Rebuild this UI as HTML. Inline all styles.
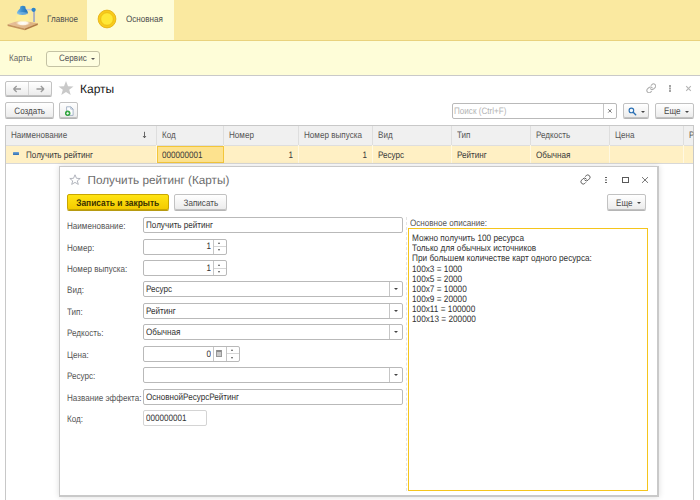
<!DOCTYPE html>
<html>
<head>
<meta charset="utf-8">
<style>
*{box-sizing:border-box;margin:0;padding:0}
html,body{width:700px;height:500px;overflow:hidden;background:#fff}
body{font-family:"Liberation Sans",sans-serif;font-size:9.3px;color:#444;position:relative;text-rendering:geometricPrecision}
.a{position:absolute;white-space:nowrap}
.t{position:absolute;white-space:nowrap;line-height:13.4px;height:13.4px;transform:scaleX(0.871);transform-origin:0 50%}
.x{display:inline-block;transform:scaleX(0.871);transform-origin:0 50%;white-space:pre}
.xc{display:inline-block;transform:scaleX(0.871);transform-origin:50% 50%}
.btn{position:absolute;border:1px solid #c2c2c2;border-radius:2px;background:linear-gradient(#ffffff,#ececec);box-shadow:0 1px 0 #b5b5b5;text-align:center;white-space:nowrap;color:#4a4a4a}
.inp{position:absolute;border:1px solid #b9b9b9;border-radius:2px;background:#fff;height:16px;line-height:15.4px;padding-left:1.6px;white-space:nowrap;color:#333}
.lbl{position:absolute;white-space:nowrap;line-height:18.8px;height:18.8px;left:67.4px;color:#555;transform:scaleX(0.871);transform-origin:0 50%}
.vd{position:absolute;top:126px;width:1px;height:37px;background:linear-gradient(#dedede 0,#dedede 19px,#fff8e2 19px,#fff8e2 37px)}
.arr{position:absolute;width:0;height:0;border-left:2px solid transparent;border-right:2px solid transparent;border-top:2.3px solid #444}
</style>
</head>
<body>
<!-- top band -->
<div class="a" style="left:0;top:0;width:700px;height:41px;background:#fae9a0"></div>
<div class="a" style="left:87px;top:0;width:87px;height:41px;background:#fefdd8"></div>
<div class="a" style="left:0;top:40px;width:700px;height:1px;background:#e9d27d"></div>
<div class="a" style="left:0;top:41px;width:700px;height:34px;background:#fefdd8"></div>
<div class="a" style="left:0;top:75px;width:700px;height:1px;background:#c9c9c9"></div>

<!-- lamp icon -->
<svg class="a" style="left:0px;top:0px" width="45" height="36" viewBox="0 0 45 36">
  <defs>
    <linearGradient id="sh" x1="0" y1="0" x2="1" y2="0"><stop offset="0" stop-color="#7fbce6"/><stop offset="0.45" stop-color="#3b8fce"/><stop offset="1" stop-color="#1f6fb3"/></linearGradient>
    <linearGradient id="bd" x1="0" y1="0" x2="1" y2="0"><stop offset="0" stop-color="#e8bf9a"/><stop offset="1" stop-color="#dcb27f"/></linearGradient>
    <radialGradient id="gl" cx="0.5" cy="0.5" r="0.5"><stop offset="0" stop-color="#ffffff"/><stop offset="0.6" stop-color="#fffaf0" stop-opacity="0.9"/><stop offset="1" stop-color="#f3dcb8" stop-opacity="0"/></radialGradient>
  </defs>
  <polygon points="7.6,24.3 19.8,20.2 37.8,23.2 24.9,28.4" fill="url(#bd)"/>
  <polygon points="7.6,24.3 24.9,28.4 24.9,30.3 7.6,26.1" fill="#c4925f"/>
  <polygon points="24.9,28.4 37.8,23.2 37.8,25 24.9,30.3" fill="#b07a47"/>
  <ellipse cx="23" cy="23" rx="7.5" ry="3" fill="url(#gl)"/>
  <polygon points="17.2,14.5 27.8,14.5 30,21.5 14.8,21.5" fill="#fdf09a" opacity="0.75"/>
  <rect x="33.1" y="10.5" width="1.9" height="11.5" fill="#aab0c0"/>
  <rect x="24.5" y="8.9" width="8.5" height="1.5" fill="#c9cbdc"/>
  <circle cx="33.6" cy="9.8" r="2.15" fill="#2c84c8"/>
  <path d="M20.3,6.6 Q22.8,4.8 25.3,6.6 L25.6,8.6 Q27.6,10.8 28,13.2 Q22.4,16.6 16.8,13.2 Q17.6,10.6 20,8.6 Z" fill="url(#sh)"/>
  <ellipse cx="22.4" cy="13.6" rx="5.2" ry="1.5" fill="#8fc6ea" opacity="0.55"/>
</svg>
<div class="t" style="left:46.6px;top:13px;color:#4d4d4d">Главное</div>

<!-- coin -->
<svg class="a" style="left:97px;top:9px" width="20" height="20" viewBox="0 0 20 20">
  <circle cx="10" cy="10" r="8.9" fill="#f8cb1c" stroke="#e2ab0a" stroke-width="0.8"/>
  <circle cx="10" cy="10" r="6.3" fill="#ffe836" stroke="#e8b40e" stroke-width="0.7"/>
</svg>
<div class="t" style="left:126px;top:13px;color:#4d4d4d">Основная</div>

<!-- second band -->
<div class="t" style="left:8.7px;top:52.4px;color:#666">Карты</div>
<div class="a" style="left:46.2px;top:50.5px;width:53.4px;height:16px;border:1px solid #c4c2a4;border-radius:3px;background:#fefee0"></div>
<div class="t" style="left:59.4px;top:52.4px;color:#555">Сервис</div>
<div class="arr" style="left:90.5px;top:58px;border-top-color:#555"></div>

<!-- nav -->
<div class="btn" style="left:5px;top:81px;width:47px;height:15px"></div>
<div class="a" style="left:28px;top:82px;width:1px;height:13px;background:#d4d4d4"></div>
<svg class="a" style="left:12px;top:84px" width="34" height="10" viewBox="0 0 34 10">
  <path d="M1.5,5 H9 M1.5,5 L4.7,2 M1.5,5 L4.7,8" stroke="#9a9a9a" stroke-width="1.3" fill="none"/>
  <path d="M32,5 H24.5 M32,5 L28.8,2 M32,5 L28.8,8" stroke="#9a9a9a" stroke-width="1.3" fill="none"/>
</svg>
<svg class="a" style="left:58.1px;top:80.1px" width="16" height="16" viewBox="0 0 16 16">
  <polygon points="8,1 10,6.2 15.5,6.4 11.2,9.8 12.7,15 8,12 3.3,15 4.8,9.8 0.5,6.4 6,6.2" fill="#c9c9c9"/>
</svg>
<div class="a" style="left:80px;top:80px;font-size:12px;line-height:18px;color:#1a1a1a">Карты</div>

<!-- link/dots/close main -->
<svg class="a" style="left:645.6px;top:82.6px" width="10.6" height="10.6" viewBox="0 0 24 24">
  <g fill="none" stroke="#adadad" stroke-width="2.4" stroke-linecap="round" stroke-linejoin="round">
    <path d="M10 13a5 5 0 0 0 7.54.54l3-3a5 5 0 0 0-7.07-7.07l-1.72 1.71"/>
    <path d="M14 11a5 5 0 0 0-7.54-.54l-3 3a5 5 0 0 0 7.07 7.07l1.71-1.71"/>
  </g>
</svg>
<div class="a" style="left:669px;top:85px;width:1.6px;height:1.6px;background:#a4a4a4;box-shadow:0 2.5px 0 #a4a4a4,0 5px 0 #a4a4a4"></div>
<svg class="a" style="left:685.4px;top:85px" width="7" height="7" viewBox="0 0 7 7"><path d="M1.2,1.2 L5.8,5.8 M5.8,1.2 L1.2,5.8" stroke="#b4b4b4" stroke-width="1.1" fill="none"/></svg>

<!-- toolbar -->
<div class="btn" style="left:5px;top:102.3px;width:48.5px;height:15.7px;line-height:17px"><span class="xc">Создать</span></div>
<div class="btn" style="left:59.2px;top:102.3px;width:19.3px;height:15.7px"></div>
<svg class="a" style="left:64px;top:105px" width="11" height="12" viewBox="0 0 11 12">
  <path d="M2.6,1.8 H6.8 L9.1,4.1 V10.4 H2.6 Z" fill="#fdfefe" stroke="#93a5bd" stroke-width="0.8"/>
  <path d="M6.8,1.8 V4.1 H9.1" fill="none" stroke="#93a5bd" stroke-width="0.7"/>
  <circle cx="3.7" cy="8.3" r="2.7" fill="#2ea43b"/>
  <path d="M3.7,6.9 V9.7 M2.3,8.3 H5.1" stroke="#fff" stroke-width="0.9"/>
</svg>

<!-- search -->
<div class="a" style="left:452px;top:103px;width:165px;height:16px;border:1px solid #b9b9b9;border-radius:2px;background:#fff"></div>
<div class="a" style="left:603px;top:104px;width:1px;height:14px;background:#c6c6c6"></div>
<div class="t" style="left:453.8px;top:105px;color:#b4b4b4">Поиск (Ctrl+F)</div>
<svg class="a" style="left:607px;top:108px" width="6" height="6" viewBox="0 0 6 6"><path d="M1.2,1.2 L4.6,4.6 M4.6,1.2 L1.2,4.6" stroke="#555" stroke-width="0.8" fill="none"/></svg>
<div class="btn" style="left:622.7px;top:102.5px;width:26.3px;height:15.5px"></div>
<svg class="a" style="left:627.5px;top:106.5px" width="9" height="9" viewBox="0 0 9 9">
  <circle cx="3.4" cy="3.4" r="2.3" fill="#f4f9fd" stroke="#2a6fb3" stroke-width="1.1"/>
  <path d="M5.2,5.2 L7.7,7.7" stroke="#2a6fb3" stroke-width="1.4" stroke-linecap="round"/>
</svg>
<div class="arr" style="left:641px;top:110.5px"></div>
<div class="btn" style="left:655px;top:102.5px;width:38.7px;height:15.5px"></div>
<div class="t" style="left:663.6px;top:105px;color:#4a4a4a">Еще</div>
<div class="arr" style="left:685.4px;top:110.5px"></div>

<!-- table -->
<div class="a" style="left:5px;top:125px;width:689px;height:375px;border:1px solid #c8c8c8;border-bottom:none;background:#fff"></div>
<div class="a" style="left:6px;top:126px;width:687px;height:19px;background:#f0f0f0"></div>
<div class="a" style="left:6px;top:145px;width:687px;height:1px;background:#dedede"></div>
<div class="a" style="left:6px;top:146px;width:687px;height:17px;background:#fff0c4"></div>
<div class="a" style="left:6px;top:163px;width:687px;height:1px;background:#d8d8d8"></div>
<div class="vd" style="left:156px"></div>
<div class="vd" style="left:223px"></div>
<div class="vd" style="left:298px"></div>
<div class="vd" style="left:372px"></div>
<div class="vd" style="left:451px"></div>
<div class="vd" style="left:530px"></div>
<div class="vd" style="left:609px"></div>
<div class="vd" style="left:683px"></div>
<div class="t" style="left:10.6px;top:129px;color:#555">Наименование</div>
<svg class="a" style="left:142px;top:131px" width="5" height="8" viewBox="0 0 5 8"><path d="M2.5,0.8 V6.6 M1,5 L2.5,6.8 L4,5" stroke="#444" stroke-width="0.8" fill="none"/></svg>
<div class="t" style="left:162px;top:129px;color:#555">Код</div>
<div class="t" style="left:229px;top:129px;color:#555">Номер</div>
<div class="t" style="left:304px;top:129px;color:#555">Номер выпуска</div>
<div class="t" style="left:378px;top:129px;color:#555">Вид</div>
<div class="t" style="left:457px;top:129px;color:#555">Тип</div>
<div class="t" style="left:536px;top:129px;color:#555">Редкость</div>
<div class="t" style="left:615px;top:129px;color:#555">Цена</div>
<div class="t" style="left:689px;top:129px;color:#555;width:5px;overflow:hidden">Р</div>
<!-- row -->
<div class="a" style="left:12.8px;top:152.2px;width:6.2px;height:2.9px;background:linear-gradient(#6fa3d6,#2f6fb3);border-radius:0.5px"></div>
<div class="t" style="left:26px;top:149px;color:#3a3a3a">Получить рейтинг</div>
<div class="a" style="left:157px;top:146px;width:67px;height:17px;background:#fde28e;border:1px solid #f3c63a"></div>
<div class="t" style="left:162px;top:149px;color:#3a3a3a">000000001</div>
<div class="t" style="left:281.2px;top:149px;width:12px;text-align:right;color:#3a3a3a;transform-origin:100% 50%">1</div>
<div class="t" style="left:355.2px;top:149px;width:12px;text-align:right;color:#3a3a3a;transform-origin:100% 50%">1</div>
<div class="t" style="left:378px;top:149px;color:#3a3a3a">Ресурс</div>
<div class="t" style="left:457px;top:149px;color:#3a3a3a">Рейтинг</div>
<div class="t" style="left:536px;top:149px;color:#3a3a3a">Обычная</div>

<!-- dialog -->
<div class="a" style="left:59px;top:166px;width:600px;height:331px;background:#fff;border:2px solid #c9c9c9;border-left-width:1px;border-top-width:1px;box-shadow:0 0 6px rgba(0,0,0,0.14)"></div>
<svg class="a" style="left:69px;top:174.3px" width="12" height="11" viewBox="0 0 12 11">
  <polygon points="6,0.8 7.5,4.3 11.2,4.5 8.3,6.9 9.3,10.4 6,8.4 2.7,10.4 3.7,6.9 0.8,4.5 4.5,4.3" fill="none" stroke="#a9adb6" stroke-width="0.9"/>
</svg>
<div class="a" style="left:87.5px;top:172px;font-size:11.75px;line-height:18px;color:#6c6c6c">Получить рейтинг (Карты)</div>
<!-- dialog icons -->
<svg class="a" style="left:580.3px;top:173.8px" width="11" height="11" viewBox="0 0 24 24">
  <g fill="none" stroke="#5c5c5c" stroke-width="2.1" stroke-linecap="round" stroke-linejoin="round">
    <path d="M10 13a5 5 0 0 0 7.54.54l3-3a5 5 0 0 0-7.07-7.07l-1.72 1.71"/>
    <path d="M14 11a5 5 0 0 0-7.54-.54l-3 3a5 5 0 0 0 7.07 7.07l1.71-1.71"/>
  </g>
</svg>
<div class="a" style="left:605.3px;top:176.8px;width:1.7px;height:1.7px;background:#5e5e5e;box-shadow:0 2.5px 0 #5e5e5e,0 5px 0 #5e5e5e"></div>
<div class="a" style="left:622.3px;top:177px;width:6.6px;height:6px;border:1px solid #5a5a5a"></div>
<svg class="a" style="left:641px;top:176px" width="8" height="8" viewBox="0 0 8 8"><path d="M1,1.1 L7,6.9 M7,1.1 L1,6.9" stroke="#555" stroke-width="0.8" fill="none"/></svg>

<!-- dialog buttons -->
<div class="a" style="left:67.2px;top:194.2px;width:101.4px;height:15.8px;border:1px solid #c9a600;border-radius:2px;background:linear-gradient(#ffe414,#f4cb00);box-shadow:0 1px 0 #b79a10;text-align:center;line-height:18.4px;font-weight:bold;font-size:9.65px;color:#3a3200"><span class="xc">Записать и закрыть</span></div>
<div class="btn" style="left:174.4px;top:194.4px;width:52.4px;height:15.6px;line-height:17.6px"><span class="xc">Записать</span></div>
<div class="btn" style="left:607px;top:194px;width:39px;height:16px"></div>
<div class="t" style="left:616px;top:196.6px;color:#4a4a4a">Еще</div>
<div class="arr" style="left:637.4px;top:202px"></div>

<!-- form -->
<div class="lbl" style="top:217.1px">Наименование:</div>
<div class="inp" style="left:143px;top:217.1px;width:260px"><span class="x">Получить рейтинг</span></div>

<div class="lbl" style="top:238.5px">Номер:</div>
<div class="inp" style="left:143px;top:238.5px;width:84px;height:16px"></div>
<div class="t" style="left:198.4px;top:240.4px;width:13px;text-align:right;color:#333;transform-origin:100% 50%">1</div>
<div class="a" style="left:213px;top:239.5px;width:1px;height:14px;background:#c6c6c6"></div>
<div class="a" style="left:214px;top:245.5px;width:12px;height:1px;background:#d6d6d6"></div>
<div class="a" style="left:218.2px;top:241.5px;width:0;height:0;border-left:1.4px solid transparent;border-right:1.4px solid transparent;border-bottom:2px solid #555"></div>
<div class="a" style="left:218.2px;top:248.7px;width:0;height:0;border-left:1.4px solid transparent;border-right:1.4px solid transparent;border-top:2px solid #555"></div>

<div class="lbl" style="top:260.0px">Номер выпуска:</div>
<div class="inp" style="left:143px;top:260px;width:84px;height:16px"></div>
<div class="t" style="left:198.4px;top:261.9px;width:13px;text-align:right;color:#333;transform-origin:100% 50%">1</div>
<div class="a" style="left:213px;top:261.0px;width:1px;height:14px;background:#c6c6c6"></div>
<div class="a" style="left:214px;top:267.6px;width:12px;height:1px;background:#d6d6d6"></div>
<div class="a" style="left:218.2px;top:263.6px;width:0;height:0;border-left:1.4px solid transparent;border-right:1.4px solid transparent;border-bottom:2px solid #555"></div>
<div class="a" style="left:218.2px;top:270.8px;width:0;height:0;border-left:1.4px solid transparent;border-right:1.4px solid transparent;border-top:2px solid #555"></div>

<div class="lbl" style="top:281.4px">Вид:</div>
<div class="inp" style="left:143px;top:281.4px;width:260px"><span class="x">Ресурс</span></div>
<div class="a" style="left:389px;top:282.4px;width:1px;height:14px;background:#c6c6c6"></div>
<div class="arr" style="left:394px;top:288.4px"></div>

<div class="lbl" style="top:302.9px">Тип:</div>
<div class="inp" style="left:143px;top:302.9px;width:260px"><span class="x">Рейтинг</span></div>
<div class="a" style="left:389px;top:303.9px;width:1px;height:14px;background:#c6c6c6"></div>
<div class="arr" style="left:394px;top:309.9px"></div>

<div class="lbl" style="top:324.3px">Редкость:</div>
<div class="inp" style="left:143px;top:324.3px;width:260px"><span class="x">Обычная</span></div>
<div class="a" style="left:389px;top:325.3px;width:1px;height:14px;background:#c6c6c6"></div>
<div class="arr" style="left:394px;top:331.3px"></div>

<div class="lbl" style="top:345.7px">Цена:</div>
<div class="inp" style="left:143px;top:345.7px;width:97px"></div>
<div class="t" style="left:198.4px;top:347.6px;width:13px;text-align:right;color:#333;transform-origin:100% 50%">0</div>
<div class="a" style="left:213px;top:346.7px;width:1px;height:14px;background:#c6c6c6"></div>
<div class="a" style="left:226px;top:346.7px;width:1px;height:14px;background:#c6c6c6"></div>
<div class="a" style="left:216.4px;top:350px;width:6px;height:7px;border:1px solid #989898;border-top:2px solid #8c8c8c;background:#c9c9c9;border-radius:0.5px"></div>
<div class="a" style="left:227px;top:353.2px;width:12px;height:1px;background:#d6d6d6"></div>
<div class="a" style="left:231.2px;top:349.3px;width:0;height:0;border-left:1.4px solid transparent;border-right:1.4px solid transparent;border-bottom:2px solid #555"></div>
<div class="a" style="left:231.2px;top:356.5px;width:0;height:0;border-left:1.4px solid transparent;border-right:1.4px solid transparent;border-top:2px solid #555"></div>

<div class="lbl" style="top:367.2px">Ресурс:</div>
<div class="inp" style="left:143px;top:367.2px;width:260px"></div>
<div class="a" style="left:389px;top:368.2px;width:1px;height:14px;background:#c6c6c6"></div>
<div class="arr" style="left:394px;top:374.2px"></div>

<div class="lbl" style="top:388.6px">Название эффекта:</div>
<div class="inp" style="left:143px;top:388.6px;width:260px"><span class="x">ОсновнойРесурсРейтинг</span></div>

<div class="lbl" style="top:410.1px">Код:</div>
<div class="inp" style="left:143px;top:410.1px;width:64px;border-color:#d4d4d4"><span class="x">000000001</span></div>

<!-- splitter + textarea -->
<div class="a" style="left:406px;top:217px;width:0;height:274px;border-left:1px dashed #e4e4e4"></div>
<div class="t" style="left:410px;top:217px;color:#555">Основное описание:</div>
<div class="a" style="left:407.8px;top:228px;width:239.8px;height:263px;border:1.3px solid #f5c51c;background:#fff;padding:4.1px 0 0 3.7px;line-height:10.15px;color:#333;white-space:pre"><div class="x" style="transform-origin:0 0;display:block;transform:scaleX(0.886)">Можно получить 100 ресурса
Только для обычных источников
При большем количестве карт одного ресурса:
100x3 = 1000
100x5 = 2000
100x7 = 10000
100x9 = 20000
100x11 = 100000
100x13 = 200000</div></div>
</body>
</html>
